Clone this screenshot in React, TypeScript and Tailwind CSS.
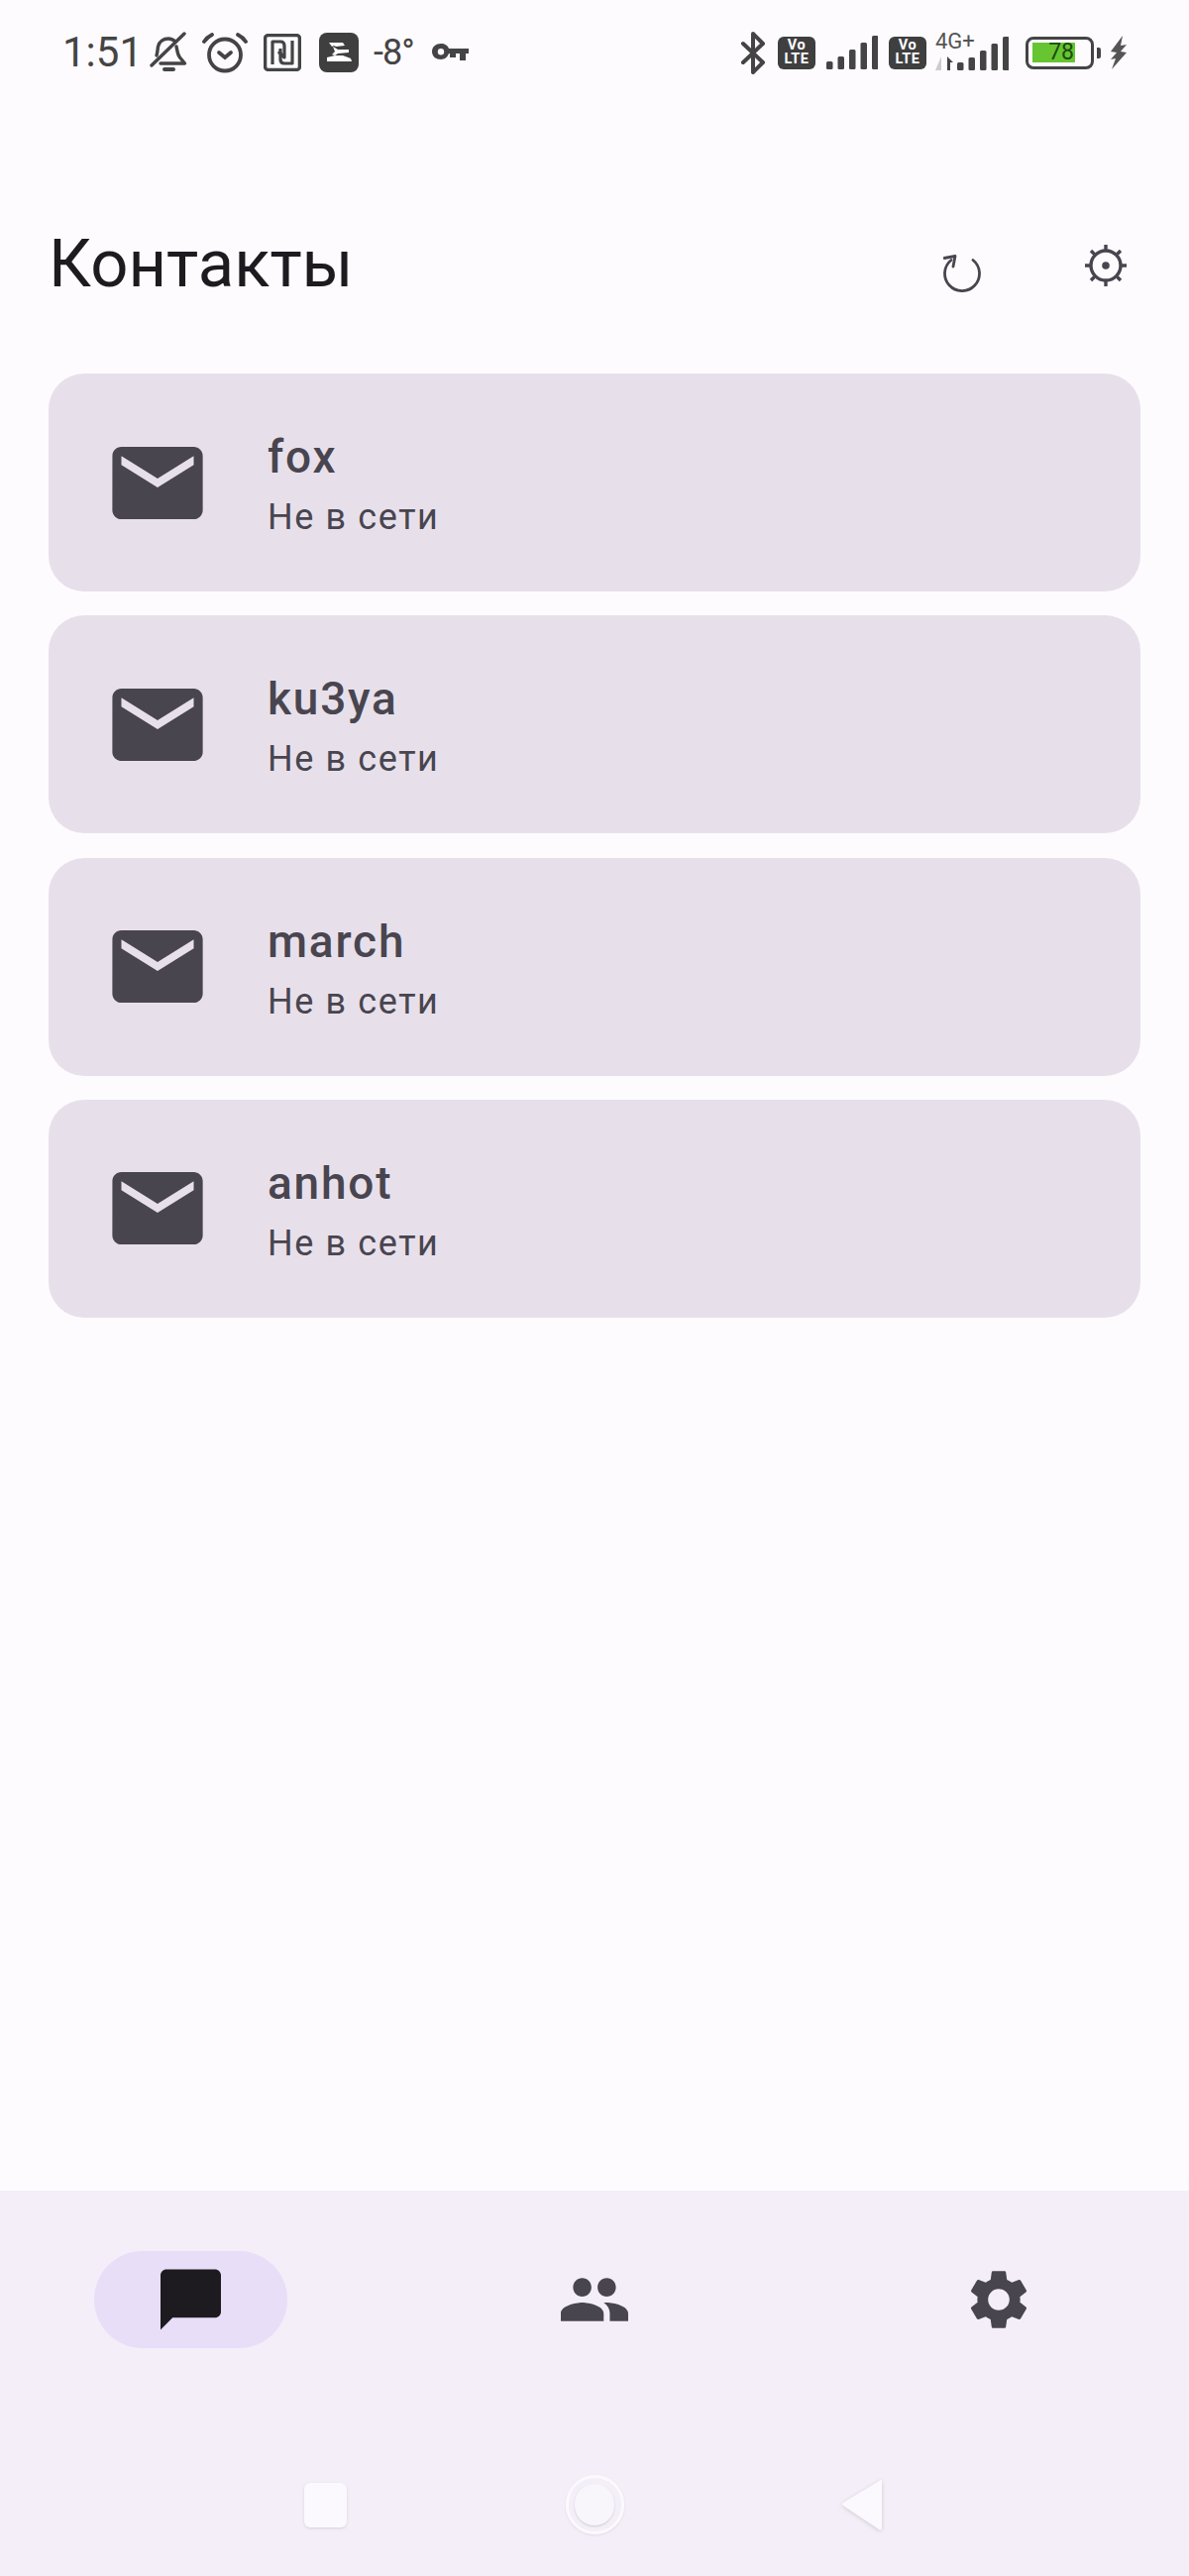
const contacts = ["fox", "ku3ya", "march", "anhot"];

function BellOff() {
  return (
    <svg viewBox="0 0 38 42" className="ml-[7px] h-[42px] w-[38px]" fill="none" stroke="#444" strokeWidth="3.4" strokeLinecap="round" strokeLinejoin="round">
      <path d="M7 24c1-3 1-6 1.500-9 1-5 5.500-8 10.500-8 3 0 5 1 7 3" />
      <path d="M27 15c1 4 1 8 3.500 11l5 6H11" />
      <path d="M2 34 35 2" />
      <path d="M15 38h9" strokeWidth="4" />
    </svg>
  );
}

function Alarm() {
  return (
    <svg viewBox="0 0 46 42" className="ml-[15px] h-[42px] w-[46px]" fill="none" stroke="#444" strokeWidth="3.8" strokeLinecap="round">
      <circle cx="23" cy="23.500" r="16" />
      <path d="M17 21l6 5 6-5" />
      <path d="M2 10c2-3 4-5 8-7M44 10c-2-3-4-5-8-7" />
    </svg>
  );
}

function Nfc() {
  return (
    <svg viewBox="0 0 38 38" className="ml-[16px] h-[38px] w-[38px]" fill="none" stroke="#444" strokeWidth="3.200" strokeLinejoin="round">
      <rect x="1.600" y="1.600" width="34.800" height="34.800" rx="3" strokeWidth="3.400" />
      <path d="M9 31V8h8c3 0 4 2 4 4v12l-6-6" />
      <path d="M29 7v23h-8c-3 0-4-2-4-4V15" />
    </svg>
  );
}

function ZBadge() {
  return (
    <span className="ml-[18px] flex h-[40px] w-[40px] items-center justify-center rounded-[8px] bg-[#3f3f3f]">
      <svg viewBox="0 0 26 20" className="h-[20px] w-[26px]" fill="#fff">
        <path d="M3 0h14l2 3-9 1-2-1-2 1z" />
        <path d="M7 4l5 3h11v3l-11 1-3 2-3-1 3-3z" />
        <path d="M1 15l8-2h8l8 3 1 3H1z" />
      </svg>
    </span>
  );
}

function Key() {
  return (
    <svg viewBox="0 0 37 18" className="ml-[18px] h-[18px] w-[37px]" fill="#444">
      <path fillRule="evenodd" d="M9 0c4 0 7 2 8 5h20v5h-3v7h-6v-7h-4v4h-6v-4h-1c-1 3-4 6-8 6-5 0-9-3-9-8s4-8 9-8zm0 5a3.200 3.200 0 1 0 0 6.400A3.200 3.200 0 0 0 9 5z" />
    </svg>
  );
}

function Bluetooth() {
  return (
    <svg viewBox="0 0 27 43" className="h-[43px] w-[27px]" fill="none" stroke="#444" strokeWidth="4" strokeLinejoin="round" strokeLinecap="round">
      <path d="M3 12l20 19-10 10V2l10 10L3 31" />
    </svg>
  );
}

function VoLte() {
  return (
    <span className="ml-[11px] flex h-[33px] w-[38px] flex-col items-center justify-center rounded-[6px] bg-[#3f3f3f] font-['Roboto',sans-serif] text-[14.500px] leading-[14px] font-bold tracking-[0.5px] text-white">
      <span>Vo</span>
      <span>LTE</span>
    </span>
  );
}

function Signal({ className }: { className: string }) {
  const bars = [8, 13, 20, 27, 34];
  return (
    <svg viewBox="0 0 52 34" className={className} fill="#444">
      {bars.map((height, i) => (
        <rect key={i} x={i * 11.500} y={34 - height} width="6.500" height={height} rx="1.500" />
      ))}
    </svg>
  );
}

function Battery() {
  return (
    <div className="ml-[17px] flex items-center gap-[3px]">
      <div className="flex h-[33px] w-[69px] items-center rounded-[8px] border-[3px] border-[#444] pl-[4px]">
        <div className="flex h-[20px] w-[43px] items-center justify-end bg-[#66c531] pr-[1px] font-['Roboto',sans-serif] text-[23px] text-[#1c4a10]">
          78
        </div>
      </div>
      <div className="h-[11px] w-[4px] rounded-r-[2px] bg-[#444]" />
    </div>
  );
}

function Bolt() {
  return (
    <svg viewBox="0 0 18 34" className="ml-[9px] h-[34px] w-[18px]" fill="#555">
      <path d="M13 0 1 16l6 1-6 7 0 0 5-1-4 11 15-17-6-1 6-7-6 1z" />
    </svg>
  );
}

function StatusBar() {
  return (
    <div className="flex h-[100px] shrink-0 items-center justify-between pt-[6px] pr-[62px] pl-[63px] text-[#444]">
      <div className="flex items-center">
        <span className="font-['Roboto',sans-serif] text-[42px] leading-none">1:51</span>
        <BellOff />
        <Alarm />
        <Nfc />
        <ZBadge />
        <span className="ml-[15px] font-['Roboto',sans-serif] text-[36px] leading-none tracking-[-1px]">-8°</span>
        <Key />
      </div>
      <div className="flex items-center">
        <Bluetooth />
        <VoLte />
        <Signal className="ml-[11px] h-[34px] w-[52px]" />
        <VoLte />
        <div className="relative ml-[9px] h-[36px] w-[74px]">
          <Signal className="absolute right-0 bottom-0 h-[34px] w-[52px]" />
          <span className="absolute top-[-4px] left-0 font-['Roboto',sans-serif] text-[22px] leading-[21px] text-[#555]">4G+</span>
          <svg viewBox="0 0 20 14" className="absolute bottom-0 left-0 h-[14px] w-[20px]">
            <path d="M6 0v14H0z" fill="#ccc" />
            <path d="M12 0l6 6h-3v8h-3z" fill="#444" />
          </svg>
        </div>
        <Battery />
        <Bolt />
      </div>
    </div>
  );
}

function MailIcon() {
  return (
    <svg viewBox="2 4 20 16" className="h-[73px] w-[92px] shrink-0" fill="#49454f">
      <path d="M20 4H4c-1.100 0-1.990.9-1.990 2L2 18c0 1.100.9 2 2 2h16c1.100 0 2-.9 2-2V6c0-1.100-.9-2-2-2zm0 4l-8 5-8-5V6l8 5 8-5v2z" />
    </svg>
  );
}

function ContactCard({ name }: { name: string }) {
  return (
    <div className="flex h-[220px] items-center rounded-[36px] bg-[#e7e0eb] pl-[64px]">
      <MailIcon />
      <div className="ml-[65px] flex flex-col pt-[6px]">
        <span className="text-[46px] leading-[58px] font-medium tracking-[1.800px] text-[#49454f]">{name}</span>
        <span className="mt-[6px] text-[36px] leading-[52px] tracking-[1.600px] text-[#49454f]">Не в сети</span>
      </div>
    </div>
  );
}

function Header() {
  return (
    <div className="flex h-[277px] shrink-0 items-start justify-between pr-[63px] pl-[49px]">
      <h1 className="mt-[118px] text-[67px] leading-[96px] font-normal text-[#1d1b20]">Контакты</h1>
      <div className="flex items-start">
        <svg viewBox="0 0 38 38" className="mt-[157px] h-[38px] w-[38px]" fill="none" stroke="#49454f" strokeWidth="2.800" strokeLinecap="round" strokeLinejoin="round">
          <path d="M30 5.500A17.500 17.500 0 1 1 8 5.500" />
          <path d="M1 3.500 12 1.500 10 12" />
        </svg>
        <svg viewBox="0 0 42 42" className="mt-[147px] ml-[105px] h-[42px] w-[42px]" fill="none" stroke="#49454f" strokeWidth="3.400">
          <circle cx="21" cy="21" r="15" />
          <circle cx="21" cy="21" r="3.800" fill="#49454f" stroke="none" />
          <path d="M21 0v5M21 37v5M0 21h5M37 21h5M6 6l3.500 3.500M32.500 32.500 36 36M36 6l-3.500 3.500M9.500 32.500 6 36" />
        </svg>
      </div>
    </div>
  );
}

function BottomBar() {
  return (
    <div className="flex h-[389px] shrink-0 flex-col bg-[#f3eef8]">
      <div className="mt-[61px] flex items-center justify-between px-[95px]">
        <div className="flex h-[98px] w-[195px] items-center justify-center rounded-full bg-[#e8def8]">
          <svg viewBox="2 2 20 20" className="h-[62px] w-[61px]" fill="#1d1b20">
            <path d="M20 2H4c-1.100 0-2 .9-2 2v18l4-4h14c1.100 0 2-.9 2-2V4c0-1.100-.9-2-2-2z" />
          </svg>
        </div>
        <div className="flex w-[195px] justify-center">
          <svg viewBox="1 5 22 14" className="h-[44px] w-[68px]" fill="#49454f">
            <path d="M16 11c1.660 0 2.990-1.340 2.990-3S17.660 5 16 5c-1.660 0-3 1.340-3 3s1.340 3 3 3zm-8 0c1.660 0 2.990-1.340 2.990-3S9.660 5 8 5C6.340 5 5 6.340 5 8s1.340 3 3 3zm0 2c-2.330 0-7 1.170-7 3.500V19h14v-2.500c0-2.330-4.670-3.500-7-3.500zm8 0c-.29 0-.62.02-.97.05 1.160.84 1.970 1.970 1.970 3.450V19h6v-2.500c0-2.330-4.670-3.500-7-3.500z" />
          </svg>
        </div>
        <div className="flex w-[195px] justify-center">
          <svg viewBox="2.600 2 18.800 20" className="h-[60px] w-[58px]" fill="#49454f">
            <path d="M19.140 12.940c.04-.3.06-.61.06-.94 0-.32-.02-.64-.07-.94l2.030-1.580c.18-.14.23-.41.12-.61l-1.920-3.320c-.12-.22-.37-.29-.59-.22l-2.390.96c-.5-.38-1.030-.7-1.620-.94l-.36-2.540c-.04-.24-.24-.41-.48-.41h-3.840c-.24 0-.43.17-.47.41l-.36 2.540c-.59.24-1.130.57-1.620.94l-2.390-.96c-.22-.08-.47 0-.59.22L2.740 8.870c-.12.21-.08.47.12.61l2.030 1.580c-.05.3-.09.63-.09.94s.02.64.07.94l-2.030 1.580c-.18.14-.23.41-.12.61l1.920 3.320c.12.22.37.29.59.22l2.390-.96c.5.38 1.030.7 1.620.94l.36 2.540c.05.24.24.41.48.41h3.840c.24 0 .44-.17.47-.41l.36-2.540c.59-.24 1.130-.56 1.620-.94l2.390.96c.22.08.47 0 .59-.22l1.920-3.320c.12-.22.07-.47-.12-.61l-2.010-1.580zM12 15.600c-1.980 0-3.600-1.620-3.600-3.600s1.620-3.600 3.600-3.600 3.600 1.620 3.600 3.600-1.620 3.600-3.600 3.600z" />
          </svg>
        </div>
      </div>
      <div className="mt-[128px] flex items-center justify-between pr-[310px] pl-[307px]">
        <div className="h-[45px] w-[43px] rounded-[6px] bg-[#fbf9fd] shadow-[0_1px_3px_rgba(0,0,0,0.12)]" />
        <div className="flex h-[60px] w-[59px] items-center justify-center rounded-full border-[3px] border-[#fbf9fd] shadow-[0_1px_3px_rgba(0,0,0,0.08)]">
          <div className="h-[42px] w-[40px] rounded-full bg-[#f8f5fb] shadow-[0_1px_2px_rgba(0,0,0,0.15)]" />
        </div>
        <svg viewBox="0 0 40 52" className="h-[52px] w-[40px] drop-shadow-[0_1px_2px_rgba(0,0,0,0.15)]" fill="#fbf9fd">
          <path d="M39 1a1 1 0 0 1 1 1v48a2 2 0 0 1-3 1L1 27a2 2 0 0 1 0-3z" />
        </svg>
      </div>
    </div>
  );
}

export default function App() {
  return (
    <div className="flex h-[2600px] w-[1200px] flex-col overflow-hidden bg-[#fdfbfe] font-['Roboto',sans-serif]">
      <StatusBar />
      <Header />
      <div className="flex flex-1 flex-col gap-[24.300px] px-[49px]">
        {contacts.map((name) => (
          <ContactCard key={name} name={name} />
        ))}
      </div>
      <BottomBar />
    </div>
  );
}
